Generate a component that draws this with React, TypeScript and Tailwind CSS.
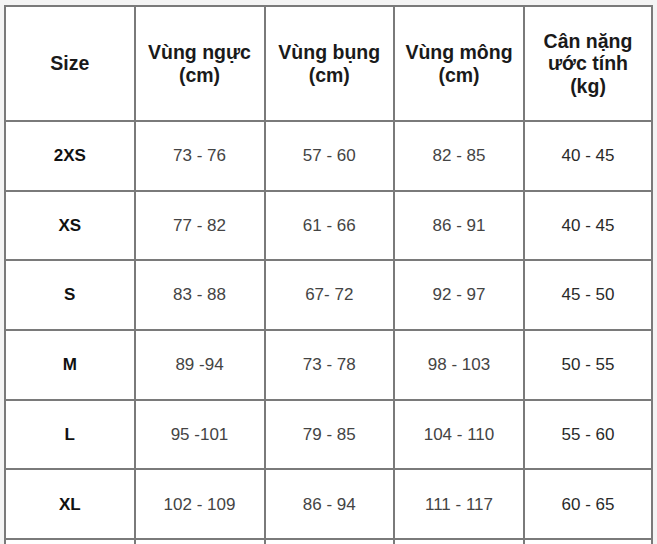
const HEADERS = ["Size", "Vùng ngực\n(cm)", "Vùng bụng\n(cm)", "Vùng mông\n(cm)", "Cân nặng\nước tính\n(kg)"]

const ROWS = [
  ["2XS", "73 - 76", "57 - 60", "82 - 85", "40 - 45"],
  ["XS", "77 - 82", "61 - 66", "86 - 91", "40 - 45"],
  ["S", "83 - 88", "67- 72", "92 - 97", "45 - 50"],
  ["M", "89 -94", "73 - 78", "98 - 103", "50 - 55"],
  ["L", "95 -101", "79 - 85", "104 - 110", "55 - 60"],
  ["XL", "102 - 109", "86 - 94", "111 - 117", "60 - 65"],
  ["", "", "", "", ""],
]

const COLS = "grid grid-cols-[129.5px_130px_129.5px_130px_128px]"

export default function App() {
  return (
    <div className="w-[657px] h-[544px] overflow-hidden bg-[#f4f4f4] pt-[5px] pl-[4px] font-['Liberation_Sans',Arial,sans-serif]">
      <div className="w-[649px] border-l-2 border-t-2 border-[#7a7a7a] bg-white">
        <div className={`${COLS} h-[115px]`}>
          {HEADERS.map((h, i) => (
            <div
              key={i}
              className="flex items-center justify-center border-r-2 border-b-2 border-[#7a7a7a] text-center whitespace-pre-line text-[19.5px] leading-[22.5px] font-bold text-[#1a1a1a]"
            >
              {h}
            </div>
          ))}
        </div>
        {ROWS.map((row, r) => (
          <div key={r} className={`${COLS} h-[69.7px]`}>
            {row.map((c, i) => (
              <div
                key={i}
                className={`flex items-center justify-center border-r-2 border-b-2 border-[#7a7a7a] text-[17px] ${
                  i === 0 ? "font-bold text-[#111]" : i === 4 ? "text-[#2a2a2a]" : "text-[#444]"
                }`}
              >
                {c}
              </div>
            ))}
          </div>
        ))}
      </div>
    </div>
  )
}
